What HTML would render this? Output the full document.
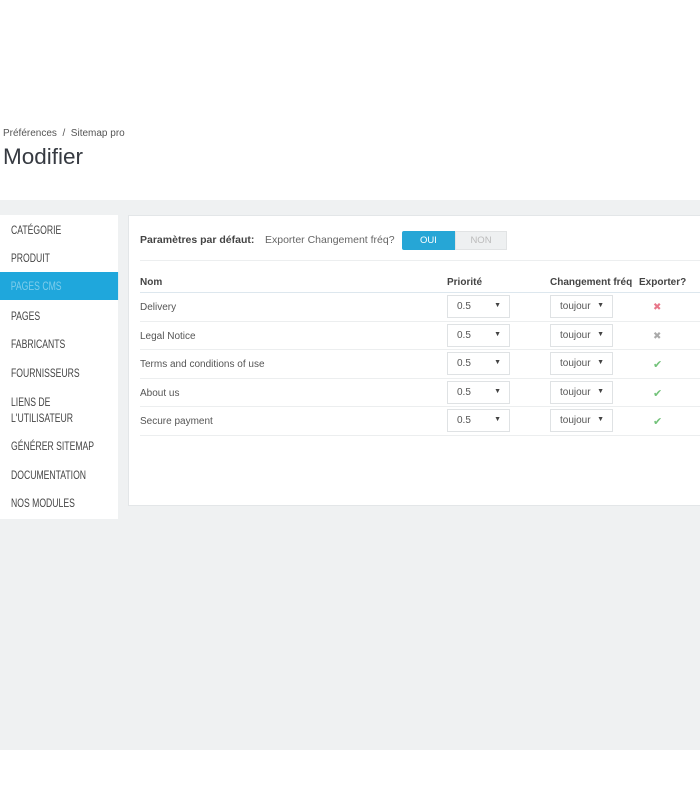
<!DOCTYPE html>
<html><head><meta charset="utf-8"><style>
*{margin:0;padding:0;box-sizing:border-box}
body{width:700px;height:800px;position:relative;background:#fff;font-family:"Liberation Sans",sans-serif;color:#555;overflow:hidden}
.gray{position:absolute;left:0;top:200px;width:700px;height:550px;background:#eff1f2}
.bc{position:absolute;left:3px;top:128px;font-size:10px;color:#555}
h1{position:absolute;left:3px;top:144px;font-size:22.5px;font-weight:normal;color:#363a41}
.side{position:absolute;left:0;top:215px;width:118px;height:304px;background:#fff}
.side div{position:absolute;left:11px;font-size:12px;color:#444;transform:scaleX(.72);transform-origin:left;white-space:nowrap;line-height:16px}
.panel{position:absolute;left:128px;top:215px;width:580px;height:291px;background:#fff;border:1px solid #e3e6e8}
.t{position:absolute;font-size:10px;white-space:nowrap}
.b{font-weight:bold;color:#444}
.hr{position:absolute;left:11px;width:560px;height:1px;background:#eceeef}
.sel{position:absolute;height:23px;border:1px solid #dfe2e4;background:#fff;font-size:10px;color:#555;padding:5px 0 0 9px}
.sel i{position:absolute;right:8px;top:6px;font-style:normal;font-size:7px;color:#444}
.x{color:#e8778a;font-size:10px}
.v{color:#72c279;font-size:11px}
</style></head><body>
<div class="gray"></div>
<div class="bc">Préférences&nbsp; /&nbsp; Sitemap pro</div>
<h1>Modifier</h1>
<div class="side">
<div style="top:7px">CATÉGORIE</div>
<div style="top:35px">PRODUIT</div>
<div style="top:57px;left:0;width:164px;height:28px;background:#1fa7dc;color:#7fcdeb;padding:6px 0 0 15px">PAGES CMS</div>
<div style="top:93px">PAGES</div>
<div style="top:121px">FABRICANTS</div>
<div style="top:150px">FOURNISSEURS</div>
<div style="top:179px">LIENS DE<br>L'UTILISATEUR</div>
<div style="top:223px">GÉNÉRER SITEMAP</div>
<div style="top:252px">DOCUMENTATION</div>
<div style="top:280px">NOS MODULES</div>
</div>
<div class="panel">
<div class="t b" style="left:11px;top:18px;font-size:10.5px">Paramètres par défaut:</div>
<div class="t" style="left:136px;top:18px;font-size:10.5px;color:#666">Exporter Changement fréq?</div>
<div style="position:absolute;left:273px;top:15px;width:53px;height:19px;background:#26a6d6;color:#fff;font-size:9.5px;text-align:center;padding-top:4px;border-radius:2px 0 0 2px">OUI</div>
<div style="position:absolute;left:326px;top:15px;width:52px;height:19px;background:#eef0f1;border:1px solid #e1e3e4;color:#bbb;font-size:9.5px;text-align:center;padding-top:3px">NON</div>
<div class="hr" style="top:44px"></div>
<div class="t b" style="left:11px;top:61px">Nom</div>
<div class="t b" style="left:318px;top:61px">Priorité</div>
<div class="t b" style="left:421px;top:61px">Changement fréq</div>
<div class="t b" style="left:510px;top:61px">Exporter?</div>
<div class="hr" style="top:76px;background:#dde7ee"></div>

<div class="t" style="left:11px;top:86px">Delivery</div>
<div class="sel" style="left:318px;top:79px;width:63px">0.5<i>▼</i></div>
<div class="sel" style="left:421px;top:79px;width:63px">toujour<i>▼</i></div>
<div class="t x" style="left:524px;top:86px">✖</div>
<div class="hr" style="top:105px"></div>

<div class="t" style="left:11px;top:115px">Legal Notice</div>
<div class="sel" style="left:318px;top:108px;width:63px">0.5<i>▼</i></div>
<div class="sel" style="left:421px;top:108px;width:63px">toujour<i>▼</i></div>
<div class="t x" style="left:524px;top:115px;color:#aaa">✖</div>
<div class="hr" style="top:133px"></div>

<div class="t" style="left:11px;top:143px">Terms and conditions of use</div>
<div class="sel" style="left:318px;top:136px;width:63px">0.5<i>▼</i></div>
<div class="sel" style="left:421px;top:136px;width:63px">toujour<i>▼</i></div>
<div class="t v" style="left:524px;top:142px">✔</div>
<div class="hr" style="top:162px"></div>

<div class="t" style="left:11px;top:172px">About us</div>
<div class="sel" style="left:318px;top:165px;width:63px">0.5<i>▼</i></div>
<div class="sel" style="left:421px;top:165px;width:63px">toujour<i>▼</i></div>
<div class="t v" style="left:524px;top:171px">✔</div>
<div class="hr" style="top:190px"></div>

<div class="t" style="left:11px;top:200px">Secure payment</div>
<div class="sel" style="left:318px;top:193px;width:63px">0.5<i>▼</i></div>
<div class="sel" style="left:421px;top:193px;width:63px">toujour<i>▼</i></div>
<div class="t v" style="left:524px;top:199px">✔</div>
<div class="hr" style="top:219px"></div>
</div>
</body></html>
